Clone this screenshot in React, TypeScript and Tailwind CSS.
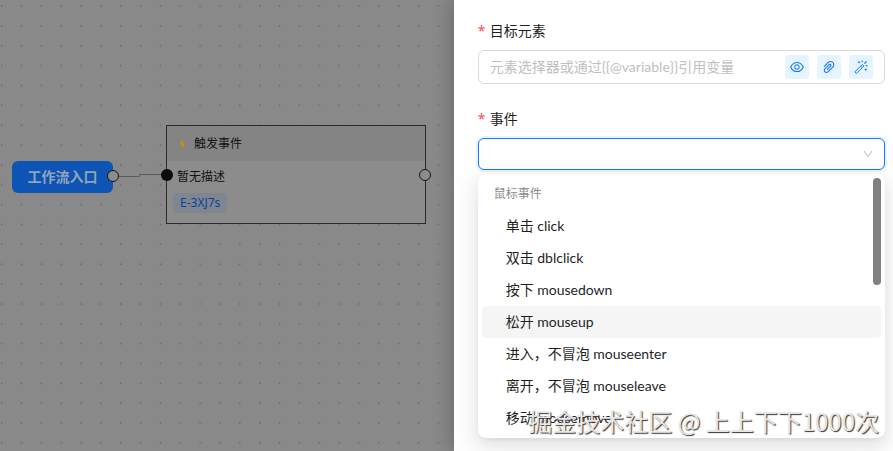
import React, { useState } from "react";
import { AiOutlineEye, AiOutlinePaperClip, AiOutlineDown } from "react-icons/ai";

const mouseEvents = [
  { value: "click", label: "单击 click" },
  { value: "dblclick", label: "双击 dblclick" },
  { value: "mousedown", label: "按下 mousedown" },
  { value: "mouseup", label: "松开 mouseup" },
  { value: "mouseenter", label: "进入，不冒泡 mouseenter" },
  { value: "mouseleave", label: "离开，不冒泡 mouseleave" },
  { value: "mousemove", label: "移动 mousemove" },
];

const WandIcon: React.FC = () => (
  <svg width="14" height="14" viewBox="0 0 14 14" fill="none" stroke="currentColor" strokeWidth="1">
    <path d="M0.800 11.900 8.300 4.400 9.900 6 2.400 13.500ZM6.600 6.100 8.200 7.700" strokeLinejoin="round" />
    <path
      d="M5 0.600 5.500 1.700 6.600 2.200 5.500 2.700 5 3.800 4.500 2.700 3.400 2.200 4.500 1.700ZM11.700 8 12.200 9.100 13.300 9.600 12.200 10.100 11.700 11.200 11.200 10.100 10.100 9.600 11.200 9.100Z"
      fill="currentColor"
      stroke="none"
    />
    <path d="M8.300 0.500V2.300M10.300 3.700 12.500 1.500M11.700 5.700H13.500" strokeWidth="1.200" />
  </svg>
);

const App: React.FC = () => {
  const [target, setTarget] = useState<string>("");
  const [active, setActive] = useState<string>("mouseup");

  return (
    <div className="relative flex h-screen overflow-hidden bg-[#898989] font-['Lato','Noto_Sans_CJK_SC',sans-serif] text-sm text-[#1f1f1f]">
      {/* Canvas */}
      <main className="relative min-w-0 flex-1 overflow-hidden">
        <svg className="absolute inset-0 h-full w-full" aria-hidden="true">
          <defs>
            <pattern id="dots" width="19.85" height="19.85" patternUnits="userSpaceOnUse">
              <rect x="1" y="5.5" width="1.3" height="1.3" fill="#5f5f5f" />
            </pattern>
          </defs>
          <rect width="100%" height="100%" fill="url(#dots)" />
          <path d="M113 176.500H139.500V174.500H166" fill="none" stroke="#5c5c5c" />
        </svg>

        {/* Entry node */}
        <div className="absolute top-[161px] left-3 flex h-8 w-[101px] items-center justify-center rounded-md bg-[#0d54b4] font-bold text-[#94a3ba]">
          工作流入口
          <span className="absolute top-[9px] -right-1.5 h-3 w-3 rounded-full border border-[#151515] bg-[#8c8c8c]" />
        </div>

        {/* Event node */}
        <section className="absolute top-[125px] left-[166px] h-[99px] w-[260px] border border-[#2b2b2b] bg-[#8c8c8c] text-xs text-[#111]">
          <header className="flex h-[35px] items-center gap-1.5 bg-[#848484] px-2.5">
            <svg width="11" height="12" viewBox="0 0 11 12" fill="#d08c08" aria-hidden="true">
              <path d="M6.200 1 2.600 6.600H5L4.200 11.300 8.400 5.200H5.900Z" />
            </svg>
            触发事件
          </header>
          <p className="px-2.5 pt-2 leading-4">暂无描述</p>
          <span className="mt-2 ml-1.5 inline-block rounded bg-[#7f868f] px-[7px] font-['Noto_Sans',sans-serif] leading-5 text-[#0b419c]">
            E-3XJ7s
          </span>
          <span className="absolute top-[43px] -left-1.5 h-3 w-3 rounded-full bg-[#0c0c0c]" />
          <span className="absolute top-[43px] -right-1.5 h-3 w-3 rounded-full border border-[#151515] bg-[#8c8c8c]" />
        </section>
      </main>

      {/* Settings drawer */}
      <aside className="relative w-[49.2%] shrink-0 bg-white pt-5 pr-2 pl-6 shadow-[-4px_0_16px_rgba(0,0,0,0.2)]">
        <label htmlFor="target" className="flex items-center gap-1 leading-[22px]">
          <span className="w-2 font-['Noto_Sans',sans-serif] text-[#ff4d4f]">*</span>
          目标元素
        </label>
        <div className="mt-2 flex h-[34px] items-center gap-2 rounded-md border border-[#d9d9d9] px-[11px]">
          <input
            id="target"
            type="text"
            value={target}
            onChange={(e) => setTarget(e.target.value)}
            placeholder="元素选择器或通过{{@variable}}引用变量"
            className="min-w-0 flex-1 outline-none placeholder:text-[#bfbfbf]"
          />
          <button aria-label="预览" className="flex h-6 w-6 items-center justify-center rounded bg-[#e6f4ff] text-[#1677ff]">
            <AiOutlineEye size={16} />
          </button>
          <button aria-label="关联" className="flex h-6 w-6 items-center justify-center rounded bg-[#e6f4ff] text-[#1677ff]">
            <AiOutlinePaperClip size={16} />
          </button>
          <button aria-label="拾取" className="flex h-6 w-6 items-center justify-center rounded bg-[#e6f4ff] text-[#1677ff]">
            <WandIcon />
          </button>
        </div>

        <label htmlFor="event" className="mt-6 flex items-center gap-1 leading-[22px]">
          <span className="w-2 font-['Noto_Sans',sans-serif] text-[#ff4d4f]">*</span>
          事件
        </label>
        <div className="relative mt-2">
          <input
            id="event"
            type="text"
            role="combobox"
            aria-expanded="true"
            aria-controls="event-list"
            className="block h-8 w-full rounded-md border border-[#1677ff] px-[11px] shadow-[0_0_0_2px_rgba(5,145,255,0.1)] outline-none"
          />
          <AiOutlineDown size={12} className="absolute top-2.5 right-[11px] text-[#bfbfbf]" />

          {/* Event list */}
          <div className="absolute top-9 right-0 left-0 h-[264px] overflow-hidden rounded-lg bg-white p-1 shadow-[0_6px_16px_rgba(0,0,0,0.08),0_3px_6px_-4px_rgba(0,0,0,0.12),0_9px_28px_8px_rgba(0,0,0,0.05)]">
            <div className="px-3 py-[5px] text-xs leading-[22px] text-[#8c8c8c]">鼠标事件</div>
            <ul id="event-list" role="listbox">
              {mouseEvents.map((item) => (
                <li
                  key={item.value}
                  role="option"
                  aria-selected={active === item.value}
                  onMouseEnter={() => setActive(item.value)}
                  className={`rounded py-[5px] pr-3 pl-6 leading-[22px] ${active === item.value ? "bg-[#f5f5f5]" : ""}`}
                >
                  {item.label}
                </li>
              ))}
            </ul>
            <span className="absolute top-1 right-1 h-[107px] w-2 rounded-full bg-[#808080]" />
          </div>
        </div>
      </aside>

      {/* Watermark */}
      <div className="pointer-events-none absolute right-3.5 bottom-3.5 font-['Noto_Sans_CJK_SC',sans-serif] text-2xl leading-8 text-[#e6e6e6] [text-shadow:1px_1px_1px_#333]">
        掘金技术社区 @ 上上下下1000次
      </div>
    </div>
  );
};

export default App;
